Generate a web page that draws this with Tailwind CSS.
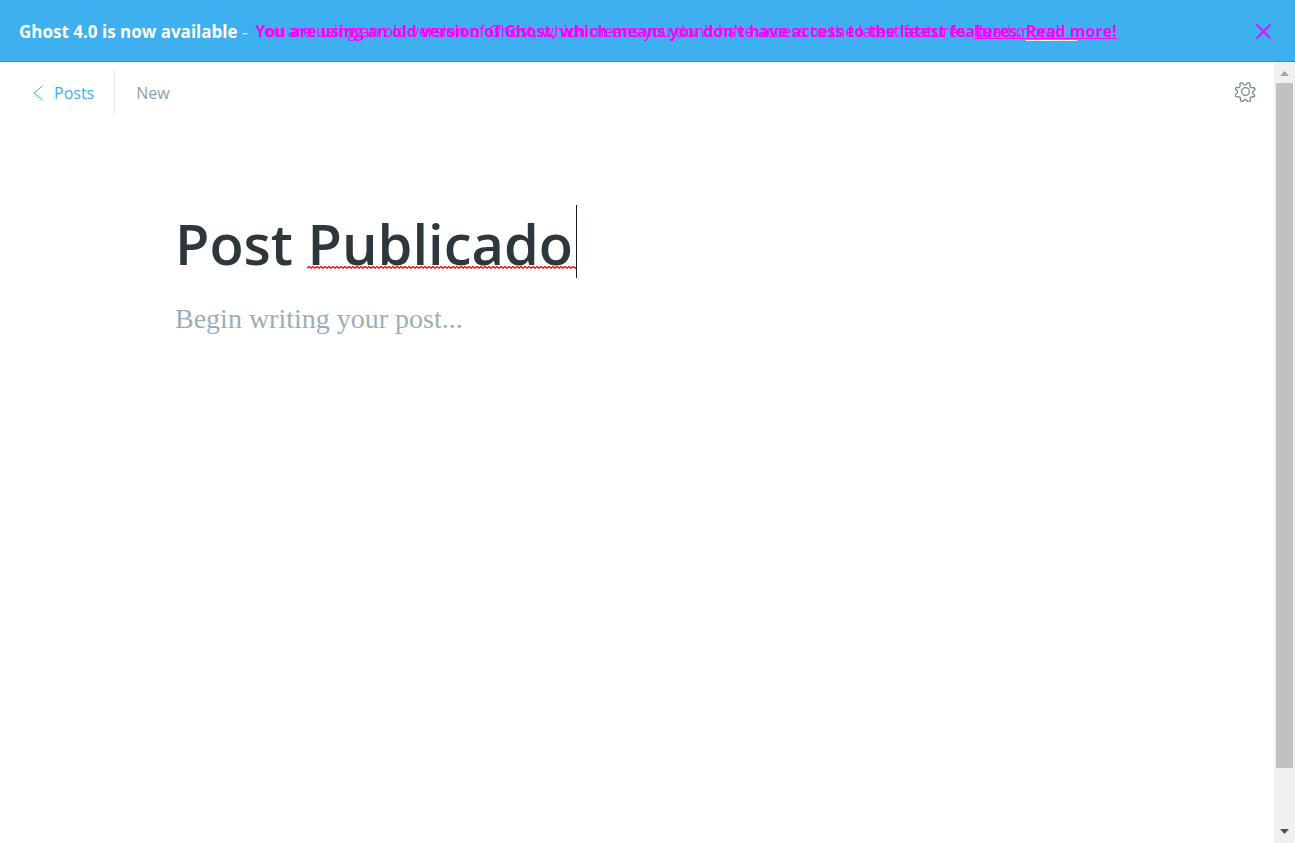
<!DOCTYPE html>
<html lang="en">
<head>
<meta charset="utf-8">
<meta name="viewport" content="width=device-width, initial-scale=1">
<title>New post - Ghost</title>
<script src="https://cdn.jsdelivr.net/npm/@tailwindcss/browser@4"></script>
</head>
<body class="flex h-screen flex-col overflow-hidden bg-white font-['Open_Sans',sans-serif] text-[#2e373b]">
  <aside class="flex shrink-0 items-center justify-between border-b border-[#1c97dd] bg-[#3eb0ef] pt-[17px] pr-[23px] pb-[15px] pl-[19px] text-[17px] leading-[29px] whitespace-nowrap text-white">
    <div class="flex gap-2">
      <p><strong class="font-bold">Ghost 4.0 is now available</strong> -</p>
      <div class="relative text-base leading-[29px] font-bold text-[#ff00ff]">
        <p>You are using an old version of Ghost, which means you don't have access to the latest features. <a href="#" class="relative underline">Read more!<span class="absolute bottom-px left-0 h-px w-[51px] bg-white"></span></a></p>
        <p class="absolute top-0 left-0 font-medium" aria-hidden="true">You are using an old version of Ghost, which means you don't have access to the latest features. <span class="underline">Read more!</span></p>
      </div>
    </div>
    <button type="button" aria-label="Close" class="text-[#ff00ff]">
      <svg class="size-[17px]" viewBox="0 0 17 17" fill="none" stroke="currentColor" stroke-width="2"><path d="M1.500 1.500l14 14M15.500 1.500l-14 14"/></svg>
    </button>
  </aside>
  <div class="flex min-h-0 flex-1">
    <div class="min-w-0 flex-1">
      <header class="flex items-center justify-between pt-2 pr-[18px] pl-[33px] text-base">
        <nav class="flex h-[45px] items-center">
          <a href="#" class="flex h-full items-center gap-[11px] border-r border-[#dfe9f0] pr-5 text-[#3eb0ef]">
            <svg class="h-4 w-[10px]" viewBox="0 0 10 16" fill="none" stroke="currentColor"><path d="M9.500 1L1 8l8.500 7"/></svg>
            <span>Posts</span>
          </a>
          <span class="pl-[21px] text-[#8d9ea8]">New</span>
        </nav>
        <button type="button" aria-label="Settings" class="pb-[3px] text-[#738a94]">
          <svg class="size-[21px]" viewBox="0 0 24 24" fill="none" stroke="currentColor" stroke-width="1.500" stroke-linejoin="round"><circle cx="12" cy="12" r="4.400"/><path transform="rotate(22.500 12 12)" d="M13.600 2.300l.6 1.700a2.200 2.200 0 0 0 3 1.300l1.400-.8a1.700 1.700 0 0 1 2.300 2.300l-.8 1.500a2.200 2.200 0 0 0 1.300 2.900l.8.3a1.400 1.400 0 0 1 0 2.800l-.8.3a2.200 2.200 0 0 0-1.300 3l.8 1.500a1.700 1.700 0 0 1-2.300 2.300l-1.500-.8a2.200 2.200 0 0 0-2.900 1.300l-.5 1.100a1.800 1.800 0 0 1-3.400 0l-.5-1.100a2.200 2.200 0 0 0-3-1.300l-1.500.8a1.700 1.700 0 0 1-2.300-2.300l.8-1.500a2.200 2.200 0 0 0-1.300-3l-1-.3a1.400 1.400 0 0 1 0-2.800l1-.3a2.200 2.200 0 0 0 1.300-2.900l-.8-1.500a1.700 1.700 0 0 1 2.300-2.300l1.500.8a2.200 2.200 0 0 0 3-1.300l.6-1.700a1.700 1.700 0 0 1 3.200 0z"/></svg>
        </button>
      </header>
      <main class="mx-auto max-w-[924px] pt-[90px]">
        <div class="relative">
          <input type="text" aria-label="Post title" value="Post Publicado" spellcheck="false" class="block h-[75px] w-full bg-transparent text-[56px] font-semibold outline-none">
          <svg class="absolute top-[61px] left-[132px] h-[3px] w-[269px]" aria-hidden="true"><defs><pattern id="wave" width="4" height="3" patternUnits="userSpaceOnUse"><path d="M-1 3L2 .5L5 3" fill="none" stroke="#ff0000" stroke-width="1.300"/></pattern></defs><rect width="100%" height="3" fill="url(#wave)"/></svg>
          <span class="absolute top-0 left-[401px] h-[73px] w-px bg-[#15212a]"></span>
        </div>
        <textarea aria-label="Post content" placeholder="Begin writing your post..." class="mt-5 block h-60 w-full resize-none font-['Liberation_Serif',serif] text-[28px] leading-[38px] outline-none placeholder:text-[#9baeb8]"></textarea>
      </main>
    </div>
    <div class="flex w-[21px] shrink-0 flex-col items-center bg-[#f0f0f0]" aria-hidden="true">
      <svg class="h-[21px] w-[9px] shrink-0" viewBox="0 0 9 21"><path d="M0 14L4.500 9L9 14z" fill="#a3a3a3"/></svg>
      <div class="h-[685px] w-[17px] shrink bg-[#c1c1c1]"></div>
      <svg class="mt-auto h-[21px] w-[9px] shrink-0" viewBox="0 0 9 21"><path d="M0 7h9L4.500 12z" fill="#505050"/></svg>
    </div>
  </div>
</body>
</html>
